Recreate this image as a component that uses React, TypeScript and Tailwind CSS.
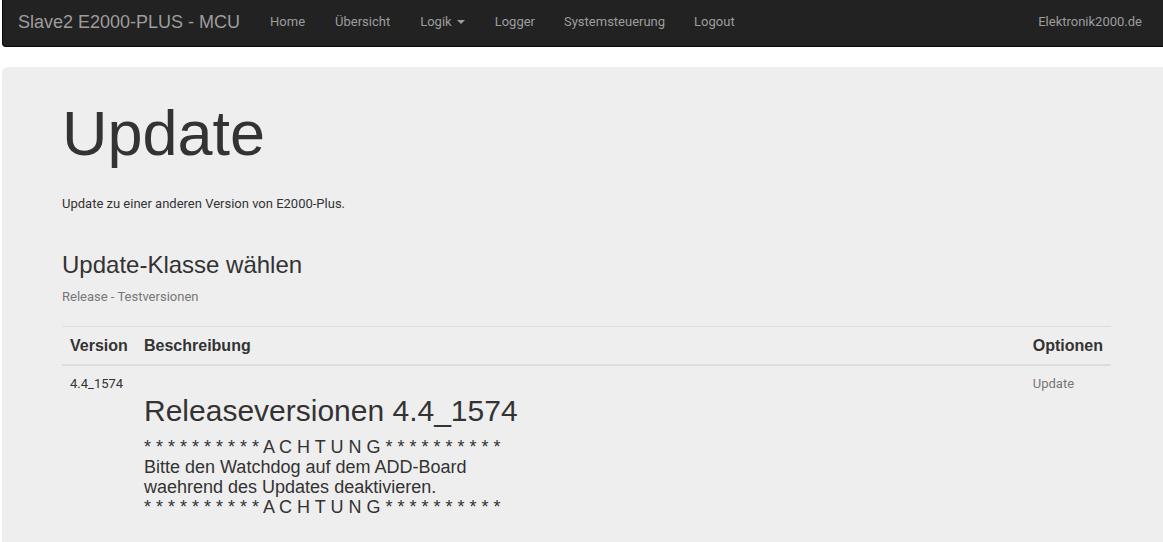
import React from "react";

const arial = { fontFamily: '"Liberation Sans", Arial, sans-serif' };

export default function App() {
  const stars = "* * * * * * * * * * A C H T U N G * * * * * * * * * *";
  return (
    <div className="h-[542px] w-[1163px] overflow-hidden bg-white pl-[2px] text-[#333]" style={{ fontFamily: 'Roboto, "Liberation Sans", sans-serif' }}>
      <nav className="flex h-[47px] w-[1170px] items-center rounded-b-[4px] border border-t-0 border-[#080808] bg-[#222] pb-[3px] pl-[15px] text-[#9d9d9d]">
        <span className="text-[18px] leading-[20px]" style={arial}>Slave2 E2000-PLUS - MCU</span>
        <div className="ml-[15px] flex items-center text-[13px] leading-[20px]">
          <span className="px-[15px]">Home</span>
          <span className="px-[15px]">Übersicht</span>
          <span className="flex items-center px-[15px]">
            Logik
            <span className="ml-[5px] mt-[1px] h-0 w-0 border-x-[4px] border-t-[4px] border-x-transparent border-t-[#9d9d9d]" />
          </span>
          <span className="pl-[15px] pr-[14px]">Logger</span>
          <span className="px-[15px]">Systemsteuerung</span>
          <span className="pl-[14px] pr-[15px]">Logout</span>
        </div>
        <span className="ml-auto mr-[29px] text-[13px] leading-[20px]">Elektronik2000.de</span>
      </nav>
      <div className="mt-[20px] h-[600px] w-[1180px] rounded-[6px] bg-[#eee] pl-[60px] pt-[32px]">
        <h1 className="m-0 text-[63px] leading-[1.1]" style={arial}>Update</h1>
        <p className="mt-[26px] text-[13px] leading-[20px]">Update zu einer anderen Version von E2000-Plus.</p>
        <h2 className="mt-[38px] text-[24px] leading-[1.1]" style={arial}>Update-Klasse wählen</h2>
        <p className="mt-[8px] text-[13px] leading-[20px] text-[#777]">Release - Testversionen</p>
        <table className="mt-[19px] w-[1049px] border-collapse">
          <thead>
            <tr className="border-t border-[#ddd]">
              <th className="w-[74px] border-b-2 border-[#ddd] px-[8px] py-[8px] text-left text-[16px] font-bold leading-[21px]" style={arial}>Version</th>
              <th className="border-b-2 border-[#ddd] px-[8px] py-[8px] text-left text-[16px] font-bold leading-[21px]" style={arial}>Beschreibung</th>
              <th className="w-[86px] border-b-2 border-[#ddd] px-[8px] py-[8px] text-left text-[16px] font-bold leading-[21px]" style={arial}>Optionen</th>
            </tr>
          </thead>
          <tbody>
            <tr>
              <td className="px-[8px] py-[8px] align-top text-[13px] leading-[20px]">4.4_1574</td>
              <td className="px-[8px] py-[8px] align-top" style={arial}>
                <h2 className="mt-[20px] mb-[10px] text-[30px] leading-[1.1]">Releaseversionen 4.4_1574</h2>
                <div className="text-[18px] leading-[20px]">
                  <div>{stars}</div>
                  <div>Bitte den Watchdog auf dem ADD-Board</div>
                  <div>waehrend des Updates deaktivieren.</div>
                  <div>{stars}</div>
                </div>
              </td>
              <td className="px-[8px] py-[8px] align-top text-[13px] leading-[20px] text-[#777]">Update</td>
            </tr>
          </tbody>
        </table>
      </div>
    </div>
  );
}
